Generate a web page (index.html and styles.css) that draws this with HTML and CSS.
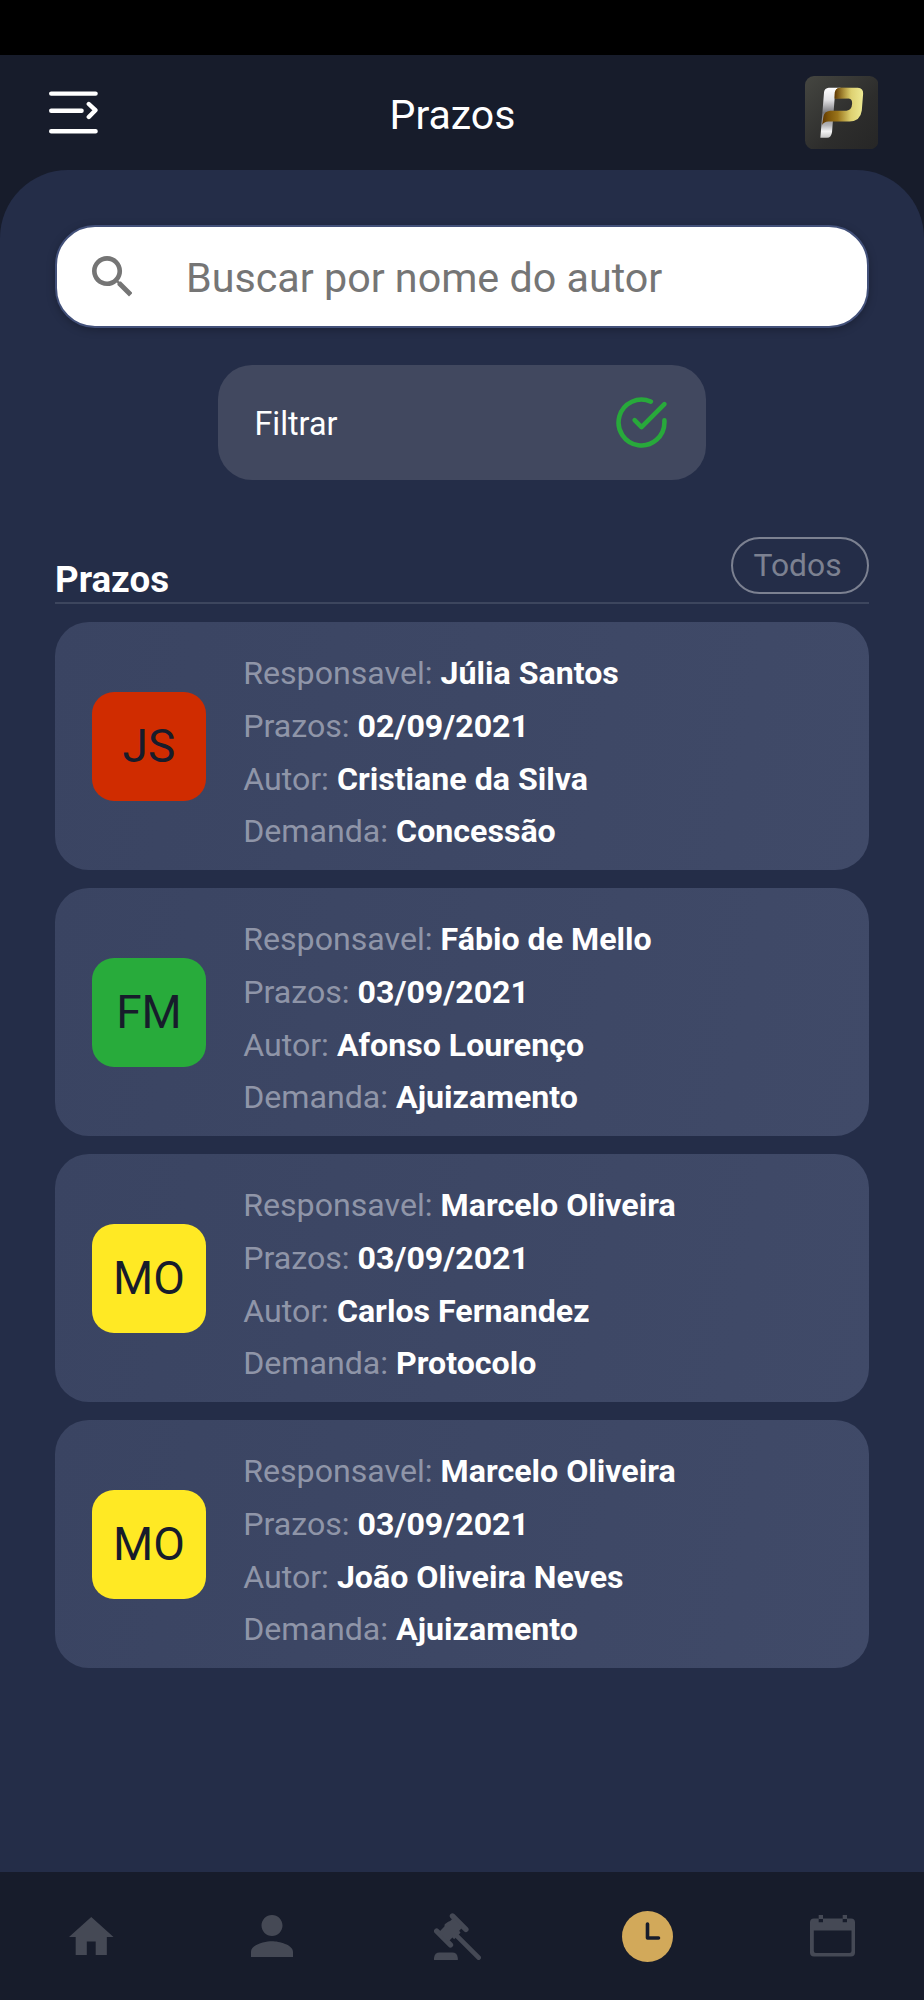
FILE: index.html
```html
<!DOCTYPE html>
<html lang="pt-BR">
<head>
<meta charset="utf-8">
<title>Prazos</title>
<link rel="stylesheet" href="styles.css">
</head>
<body>
<div class="status"></div>
<header class="header">
  <svg class="menu" viewBox="0 0 49 43" fill="none" stroke="#fff" stroke-width="4.4" stroke-linecap="round" stroke-linejoin="round"><path d="M2.2 2.6H46.6M2.2 19.8H32.6M2.2 40.2H46.6M39.8 13L46.4 19.2L39.8 26"/></svg>
  <h1 class="title">Prazos</h1>
  <svg class="logo" viewBox="74 77 220 220">
    <defs>
      <linearGradient id="bg" x1="0" y1="0" x2="1" y2="1"><stop offset="0" stop-color="#454641"/><stop offset=".6" stop-color="#2d2d2c"/><stop offset="1" stop-color="#262626"/></linearGradient>
      <linearGradient id="silver" x1="0" y1="0" x2="0" y2="1"><stop offset="0" stop-color="#fff"/><stop offset=".25" stop-color="#e0e0e2"/><stop offset=".5" stop-color="#77777b"/><stop offset=".75" stop-color="#b5b5b8"/><stop offset=".87" stop-color="#f4f4f4"/><stop offset="1" stop-color="#c5c5c5"/></linearGradient>
      <linearGradient id="gold" x1="0" y1="0" x2="1" y2="0"><stop offset="0" stop-color="#5d3500"/><stop offset=".15" stop-color="#7c5408"/><stop offset=".38" stop-color="#9a741a"/><stop offset=".7" stop-color="#ddd070"/><stop offset="1" stop-color="#eeea94"/></linearGradient>
      <linearGradient id="goldTop" x1="0" y1="0" x2="1" y2="0"><stop offset="0" stop-color="#5d3500"/><stop offset="1" stop-color="#d5c463" stop-opacity="0"/></linearGradient>
    </defs>
    <rect x="74" y="77" width="220" height="220" rx="27" fill="url(#bg)"/>
    <path d="M145 112H181Q164 117 163 140L155 244Q153 262 140 262H120L131 125Q133 113 145 112Z" fill="url(#silver)"/>
    <path d="M179 112H232Q249 113 248 130L244 180Q240 212 207 213H144Q131 213 125 224L129 199Q131 183 149 181H198Q214 179 215 160Q216 145 205 144H163V132Q163 113 179 112Z" fill="url(#gold)"/>
    <path d="M179 112H215V144H163V132Q163 113 179 112Z" fill="url(#goldTop)"/>
  </svg>
</header>
<main class="panel">
  <div class="search">
    <svg class="search-icon" viewBox="3 3 17.5 17.5"><path fill="#757575" d="M15.5 14h-.79l-.28-.27C15.41 12.59 16 11.11 16 9.5 16 5.91 13.09 3 9.5 3S3 5.91 3 9.5 5.91 16 9.5 16c1.61 0 3.09-.59 4.23-1.57l.27.28v.79l5 4.99L20.49 19l-4.99-5zm-6 0C7.01 14 5 11.99 5 9.5S7.01 5 9.5 5 14 7.01 14 9.5 11.99 14 9.5 14z"/></svg>
    <span class="placeholder">Buscar por nome do autor</span>
  </div>
  <div class="filter">
    <span>Filtrar</span>
    <svg class="check" viewBox="0 0 24 24" fill="none" stroke="#28a93b" stroke-width="2" stroke-linecap="round" stroke-linejoin="round"><path d="M22 11.08V12a10 10 0 1 1-5.93-9.14"/><path d="M22 4L12 14.01l-3-3"/></svg>
  </div>
  <div class="section-head">
    <h2 class="section-title">Prazos</h2>
    <span class="pill">Todos</span>
  </div>
  <div class="list">
    <article class="card">
      <div class="avatar red">JS</div>
      <div class="info">
        <p>Responsavel: <b>Júlia Santos</b></p>
        <p>Prazos: <b>02/09/2021</b></p>
        <p>Autor: <b>Cristiane da Silva</b></p>
        <p>Demanda: <b>Concessão</b></p>
      </div>
    </article>
    <article class="card">
      <div class="avatar green">FM</div>
      <div class="info">
        <p>Responsavel: <b>Fábio de Mello</b></p>
        <p>Prazos: <b>03/09/2021</b></p>
        <p>Autor: <b>Afonso Lourenço</b></p>
        <p>Demanda: <b>Ajuizamento</b></p>
      </div>
    </article>
    <article class="card">
      <div class="avatar yellow">MO</div>
      <div class="info">
        <p>Responsavel: <b>Marcelo Oliveira</b></p>
        <p>Prazos: <b>03/09/2021</b></p>
        <p>Autor: <b>Carlos Fernandez</b></p>
        <p>Demanda: <b>Protocolo</b></p>
      </div>
    </article>
    <article class="card">
      <div class="avatar yellow">MO</div>
      <div class="info">
        <p>Responsavel: <b>Marcelo Oliveira</b></p>
        <p>Prazos: <b>03/09/2021</b></p>
        <p>Autor: <b>João Oliveira Neves</b></p>
        <p>Demanda: <b>Ajuizamento</b></p>
      </div>
    </article>
  </div>
</main>
<nav class="nav">
  <svg class="i-home" viewBox="2 3 20 17"><path d="M10 20v-6h4v6h5v-8h3L12 3 2 12h3v8z"/></svg>
  <svg class="i-person" viewBox="4 4 16 16"><path d="M12 12c2.21 0 4-1.79 4-4s-1.79-4-4-4-4 1.79-4 4 1.79 4 4 4zm0 2c-2.67 0-8 1.34-8 4v2h16v-2c0-2.66-5.33-4-8-4z"/></svg>
  <svg class="i-gavel" viewBox="102 158 140 140">
    <g stroke="#454955" stroke-linecap="round" fill="none"><path stroke-width="16" d="M157 167L197 207M110 212L151 253"/><path stroke-width="14" d="M155 211L235 291"/></g>
    <path d="M160 172L150 182Q144 184 139 188Q132 191 133 198L115 217L145 243L157 231L162 236L181 217L177 211L188 200Z"/>
    <path d="M102 298v-6q2-16 17-16h37q15 0 17 16v6z"/>
  </svg>
  <svg class="i-clock" viewBox="0 0 51 51"><circle cx="25.5" cy="25.5" r="25.5" fill="#d2a95a"/><path d="M25.5 13V27H36.5" fill="none" stroke="#171c2b" stroke-width="3.6" stroke-linecap="round" stroke-linejoin="round"/></svg>
  <svg class="i-cal" viewBox="0 0 45 42"><path fill-rule="evenodd" d="M4 3.5H8.7V7.3H13V3.5H32.7V7.3H37V3.5H41Q45 3.5 45 7.5V37.5Q45 41.5 41 41.5H4Q0 41.5 0 37.5V7.5Q0 3.5 4 3.5ZM3.8 15.5V36Q3.8 38 5.8 38H39.5Q41.5 38 41.5 36V15.5Z"/><path d="M8.7 0H13V4H8.7ZM32.7 0H37V4H32.7Z"/></svg>
</nav>
</body>
</html>
```
FILE: styles.css
```css
* { box-sizing: border-box; margin: 0; padding: 0; }
body { width: 924px; height: 2000px; display: flex; flex-direction: column; background: #171c2b; color: #fff; font-family: Roboto, "Liberation Sans", sans-serif; overflow: hidden; }
svg { display: block; flex: none; }
.status { height: 55px; background: #000; flex: none; }
.header { height: 115px; flex: none; display: grid; grid-template-columns: 1fr auto 1fr; align-items: center; padding: 0 46px 0 49px; }
.menu { width: 49px; height: 43px; }
.title { font-size: 41px; font-weight: 400; line-height: 48px; padding-top: 5px; margin-right: 22px; }
.logo { width: 73.5px; height: 73.5px; justify-self: end; }
.panel { flex: 1; background: #242d48; border-radius: 68px 68px 0 0; padding: 55px 55px 0; display: flex; flex-direction: column; }
.search { height: 103px; border: 2px solid #43517a; border-radius: 40px; background: #fff; display: flex; align-items: center; padding-left: 34.5px; box-shadow: 0 2px 8px rgba(0, 0, 0, .25); }
.search-icon { width: 40.5px; height: 40.5px; }
.placeholder { margin-left: 54px; padding-top: 2px; color: #757575; font-size: 41.25px; line-height: 48px; }
.filter { width: 488px; height: 115px; margin: 36.5px 0 0 163px; border-radius: 34px; background: #41485f; display: flex; align-items: center; justify-content: space-between; padding: 0 37px 0 36.5px; font-size: 32.3px; }
.filter span { padding-top: 3px; }
.check { width: 55px; height: 55px; }
.section-head { height: 124.5px; display: flex; justify-content: space-between; align-items: flex-end; border-bottom: 2px solid #3d465e; }
.section-title { font-size: 36.7px; line-height: 44px; font-weight: 700; }
.pill { width: 138px; height: 57px; margin-bottom: 8px; border: 2px solid #7c8191; border-radius: 29px; color: #7c8191; font-size: 31.8px; line-height: 53px; padding-left: 20.5px; }
.list { display: flex; flex-direction: column; gap: 18px; padding-top: 18px; }
.card { height: 248px; border-radius: 34px; background: linear-gradient(100deg, #3a4462, #404a68); display: flex; align-items: center; padding-left: 36.7px; gap: 37px; }
.avatar { width: 114.5px; height: 109px; border-radius: 22px; color: #171c2b; font-size: 46px; text-align: center; line-height: 109px; }
.red { background: #d02c00; }
.green { background: #28ab3b; }
.yellow { background: #ffe924; }
.info { font-size: 32.15px; line-height: 52.8px; color: #8f95a8; padding-top: 13px; }
.info b { color: #fff; }
.nav { height: 128px; flex: none; display: flex; align-items: center; justify-content: space-between; padding: 0 69px; background: #171c2b; fill: #454955; }
.i-home { width: 44.5px; height: 42px; }
.i-person { width: 42px; height: 42px; margin: 0 3px 0 -1px; }
.i-gavel { width: 47px; height: 47px; margin-right: 2px; }
.i-clock { width: 51px; height: 51px; margin-right: -1px; }
.i-cal { width: 45px; height: 42px; }
```
